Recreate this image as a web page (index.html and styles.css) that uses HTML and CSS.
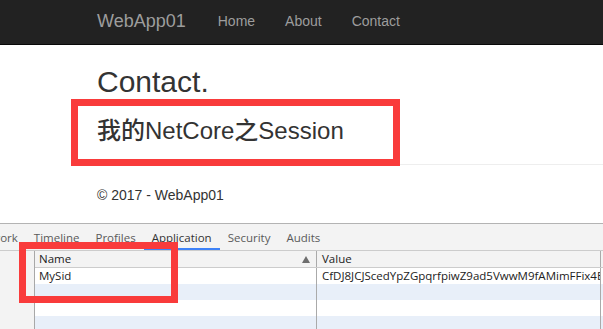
FILE: index.html
```html
<!DOCTYPE html>
<html lang="en">
<head>
<meta charset="utf-8">
<title>Contact - WebApp01</title>
<link rel="stylesheet" href="styles.css">
</head>
<body>
<nav class="navbar">
  <div class="nav-inner">
    <a class="brand" href="#">WebApp01</a>
    <ul class="nav-links">
      <li><a href="#">Home</a></li>
      <li><a href="#">About</a></li>
      <li><a href="#">Contact</a></li>
    </ul>
  </div>
</nav>
<main class="page">
  <div class="container">
    <h2 class="title">Contact.</h2>
    <h3 class="subtitle">我的NetCore之Session</h3>
    <hr class="rule">
    <footer class="footer"><p>© 2017 - WebApp01</p></footer>
  </div>
  <div class="annot annot-page"></div>
</main>
<section class="devtools">
  <div class="dt-tabs">
    <span class="dt-tab dt-tab-first">Network</span>
    <span class="dt-tab">Timeline</span>
    <span class="dt-tab">Profiles</span>
    <span class="dt-tab is-active">Application</span>
    <span class="dt-tab">Security</span>
    <span class="dt-tab">Audits</span>
  </div>
  <div class="dt-body">
    <div class="dt-side"></div>
    <div class="dt-grid">
      <div class="dt-row dt-head">
        <div class="cell cell-name">Name<svg class="sort" width="8" height="7" viewBox="0 0 8 7"><path d="M4 0 L8 7 L0 7 Z" fill="#6e6e6e"/></svg></div>
        <div class="cell cell-value">Value</div>
        <div class="cell cell-rest"></div>
      </div>
      <div class="dt-row">
        <div class="cell cell-name">MySid</div>
        <div class="cell cell-value">CfDJ8JCJScedYpZGpqrfpiwZ9ad5VwwM9fAMimFFix4EbXkR2sQm7uT</div>
        <div class="cell cell-rest"></div>
      </div>
      <div class="dt-row alt">
        <div class="cell cell-name"></div>
        <div class="cell cell-value"></div>
        <div class="cell cell-rest"></div>
      </div>
      <div class="dt-row">
        <div class="cell cell-name"></div>
        <div class="cell cell-value"></div>
        <div class="cell cell-rest"></div>
      </div>
      <div class="dt-row alt">
        <div class="cell cell-name"></div>
        <div class="cell cell-value"></div>
        <div class="cell cell-rest"></div>
      </div>
    </div>
  </div>
  <div class="annot annot-dev"></div>
</section>
</body>
</html>
```
FILE: styles.css
```css
* { box-sizing: border-box; }
html, body { margin: 0; padding: 0; }
body {
  width: 603px;
  height: 329px;
  overflow: hidden;
  display: flex;
  flex-direction: column;
  background: #fff;
  font-family: "Liberation Sans", Arial, sans-serif;
  color: #333;
  position: relative;
}

/* navbar */
.navbar {
  height: 45px;
  flex: none;
  background: #222;
  border-bottom: 1px solid #080808;
}
.nav-inner {
  height: 44px;
  display: flex;
  align-items: center;
  padding-left: 97px;
  padding-bottom: 3px;
}
.brand {
  font-size: 18px;
  line-height: 20px;
  color: #9d9d9d;
  text-decoration: none;
  margin-right: 17px;
}
.nav-links {
  list-style: none;
  margin: 0;
  padding: 0;
  display: flex;
}
.nav-links a {
  display: block;
  padding: 0 15px;
  font-size: 14px;
  line-height: 20px;
  color: #9d9d9d;
  text-decoration: none;
}

/* page */
.page {
  position: relative;
  height: 178px;
  flex: none;
}
.container {
  padding-left: 97px;
  width: 820px;
  padding-top: 20px;
}
.title {
  margin: 0 0 10px;
  font-size: 30px;
  line-height: 33px;
  font-weight: 500;
  color: #333;
}
.subtitle {
  margin: 20px 0 10px;
  font-size: 24px;
  line-height: 26.4px;
  font-weight: 500;
  color: #333;
  font-family: "Liberation Sans", "Noto Sans CJK SC", Arial, sans-serif;
}
.rule {
  margin: 20px 0 20px;
  border: 0;
  border-top: 1px solid #eee;
  height: 0;
}
.footer p {
  margin: 0;
  font-size: 14px;
  line-height: 20px;
  color: #333;
}

/* annotation boxes */
.annot {
  position: absolute;
  border: 7px solid #f93b3b;
}
.annot-page {
  left: 71px;
  top: 54px;
  width: 329px;
  height: 67px;
}
.annot-dev {
  left: 19px;
  top: 18px;
  width: 159px;
  height: 61px;
}

/* devtools */
.devtools {
  position: relative;
  flex: 1;
  border-top: 1px solid #b3b3b3;
  background: #f3f3f3;
  font-family: "Open Sans", "Noto Sans", sans-serif;
  font-size: 11.5px;
  display: flex;
  flex-direction: column;
}
.dt-tabs {
  height: 27px;
  flex: none;
  display: flex;
  align-items: stretch;
  border-bottom: 1px solid #ccc;
  white-space: nowrap;
}
.dt-tab {
  padding: 3px 8px 0;
  line-height: 21px;
  color: #5a5a5a;
  border-bottom: 2px solid transparent;
}
.dt-tab-first {
  margin-left: -36px;
}
.dt-tab.is-active {
  color: #333;
  border-bottom-color: #3e82f7;
}
.dt-body {
  flex: 1;
  display: flex;
}
.dt-side {
  width: 35px;
  flex: none;
  border-right: 1px solid #a8a8a8;
  background: #f3f3f3;
}
.dt-grid {
  flex: 1;
  background: #fff;
  display: flex;
  flex-direction: column;
}
.dt-row {
  height: 16px;
  display: flex;
  flex: none;
  color: #222;
}
.dt-row.alt { background: #e8eff9; }
.dt-head {
  height: 17px;
  background: #f3f3f3;
  border-bottom: 1px solid #ccc;
}
.cell {
  line-height: 16px;
  white-space: nowrap;
  overflow: hidden;
}
.cell-name {
  width: 282px;
  flex: none;
  padding-left: 4px;
  border-right: 1px solid #aaa;
  position: relative;
}
.cell-value {
  width: 284px;
  flex: none;
  padding-left: 5px;
  border-right: 1px solid #aaa;
}
.cell-rest { flex: 1; }
.sort {
  position: absolute;
  right: 6px;
  top: 5px;
}
```
